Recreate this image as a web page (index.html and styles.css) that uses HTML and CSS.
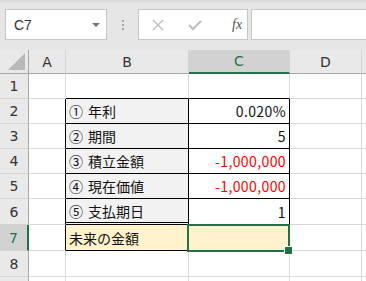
FILE: index.html
```html
<!DOCTYPE html>
<html lang="ja">
  <head>
    <meta charset="UTF-8" />
    <title>Excel</title>
    <link rel="stylesheet" href="styles.css">
  </head>
  <body>
    <div class="toolbar">
      <div class="namebox">
        <span>C7</span>
        <span class="arrow"></span>
      </div>
      <div class="grip"><i></i><i></i><i></i></div>
      <div class="fbuttons">
        <svg width="12" height="12" viewBox="0 0 12 12"><path d="M1 1 L11 11 M11 1 L1 11" stroke="#bdbdbd" stroke-width="1.4" fill="none"/></svg>
        <svg width="14" height="12" viewBox="0 0 14 12"><path d="M1 6 L5 10 L13 2" stroke="#bdbdbd" stroke-width="2" fill="none"/></svg>
        <span class="fx">fx</span>
      </div>
      <div class="finput"></div>
    </div>

    <div class="sheet">
      <div class="corner"><svg width="28" height="23" viewBox="0 0 28 23"><path d="M8 20 L25 20 L25 3 Z" fill="#b8b8b8"/></svg></div>
      <div class="colhead">A</div>
      <div class="colhead">B</div>
      <div class="colhead sel">C</div>
      <div class="colhead">D</div>
      <div class="colhead last"></div>

      <div class="rowhead">1</div>
      <div class="cell"></div>
      <div class="cell btop"></div>
      <div class="cell btop"></div>
      <div class="cell"></div>
      <div class="cell"></div>

      <div class="rowhead">2</div>
      <div class="cell bleft"></div>
      <div class="cell box label"><span class="no">①</span>年利</div>
      <div class="cell box num">0.020%</div>
      <div class="cell"></div>
      <div class="cell"></div>

      <div class="rowhead">3</div>
      <div class="cell bleft"></div>
      <div class="cell box label"><span class="no">②</span>期間</div>
      <div class="cell box num">5</div>
      <div class="cell"></div>
      <div class="cell"></div>

      <div class="rowhead">4</div>
      <div class="cell bleft"></div>
      <div class="cell box label"><span class="no">③</span>積立金額</div>
      <div class="cell box num red">-1,000,000</div>
      <div class="cell"></div>
      <div class="cell"></div>

      <div class="rowhead">5</div>
      <div class="cell bleft"></div>
      <div class="cell box label"><span class="no">④</span>現在価値</div>
      <div class="cell box num red">-1,000,000</div>
      <div class="cell"></div>
      <div class="cell"></div>

      <div class="rowhead">6</div>
      <div class="cell bleft"></div>
      <div class="cell box label dbl"><span class="no">⑤</span>支払期日</div>
      <div class="cell box num">1</div>
      <div class="cell"></div>
      <div class="cell"></div>

      <div class="rowhead sel">7</div>
      <div class="cell bleft"></div>
      <div class="cell box label yellow">未来の金額</div>
      <div class="cell box yellow active"></div>
      <div class="cell"></div>
      <div class="cell"></div>

      <div class="rowhead">8</div>
      <div class="cell"></div>
      <div class="cell"></div>
      <div class="cell"></div>
      <div class="cell"></div>
      <div class="cell"></div>

      <div class="rowhead"></div>
      <div class="cell"></div>
      <div class="cell"></div>
      <div class="cell"></div>
      <div class="cell"></div>
      <div class="cell"></div>
    </div>
  </body>
</html>
```

FILE: styles.css
```css
* {
  box-sizing: border-box;
}

body {
  margin: 0;
  overflow: hidden;
  font-family: "Noto Sans CJK JP", "Noto Sans", sans-serif;
  background: #fff;
}

.toolbar {
  height: 50px;
  background: #e6e6e6;
  border-top: 2px solid #dcdcdc;
  display: flex;
  align-items: flex-start;
  padding-top: 7px;
  padding-left: 5px;
}

.namebox {
  width: 102px;
  height: 31px;
  background: #fff;
  border: 1px solid #c6c6c6;
  display: flex;
  align-items: center;
  justify-content: space-between;
  padding: 0 6px 0 8px;
  font-family: "Liberation Sans", sans-serif;
  font-size: 14px;
  color: #333;
}

.arrow {
  width: 0;
  height: 0;
  border-left: 4px solid transparent;
  border-right: 4px solid transparent;
  border-top: 4px solid #777;
}

.grip {
  width: 31px;
  height: 31px;
  display: flex;
  flex-direction: column;
  align-items: center;
  justify-content: center;
  gap: 2px;
}

.grip i {
  width: 2px;
  height: 2px;
  background: #a6a6a6;
}

.fbuttons {
  width: 110px;
  height: 31px;
  background: #fff;
  border: 1px solid #c6c6c6;
  display: flex;
  align-items: center;
  padding-left: 13px;
  gap: 24px;
}

.fx {
  font-family: "Liberation Serif", serif;
  font-style: italic;
  font-size: 14px;
  color: #555;
  margin-left: 6px;
}

.finput {
  flex: 1;
  height: 31px;
  margin-left: 3px;
  background: #fff;
  border: 1px solid #c6c6c6;
  border-right: none;
}

.sheet {
  display: grid;
  grid-template-columns: 29px 37px 123px 101px 72px 1fr;
  grid-template-rows: 24px repeat(5, 25px) repeat(4, 26px);
}

.corner,
.colhead,
.rowhead {
  background: #e9e9e9;
  color: #333;
  font-family: "DejaVu Sans", sans-serif;
  font-size: 14px;
  display: flex;
  align-items: center;
  justify-content: center;
  border-right: 1px solid #d4d4d4;
  border-bottom: 1px solid #d4d4d4;
}

.corner,
.colhead {
  border-bottom-color: #a8a8a8;
}

.corner,
.rowhead {
  border-right-color: #a8a8a8;
}

.colhead.sel {
  background: #d2d2d2;
  color: #217346;
  border-bottom: 2px solid #217346;
}

.rowhead.sel {
  background: #d2d2d2;
  color: #217346;
  border-right: 2px solid #217346;
}

.cell {
  border-right: 1px solid #d9d9d9;
  border-bottom: 1px solid #d9d9d9;
  font-size: 14px;
  color: #111;
  display: flex;
  align-items: center;
  padding: 0 3px;
  white-space: nowrap;
}

.btop {
  border-bottom-color: #000;
}

.bleft {
  border-right-color: #000;
}

.box {
  border-right-color: #000;
  border-bottom-color: #000;
}

.label {
  background: #f2f2f2;
}

.no {
  margin-right: 5px;
}

.dbl {
  border-bottom: 3px double #000;
}

.num {
  justify-content: flex-end;
  letter-spacing: 0.4px;
}

.red {
  color: #ff0000;
}

.yellow {
  background: #fff2cc;
}

.active {
  position: relative;
}

.active::after {
  content: "";
  position: absolute;
  top: -1px;
  left: -2px;
  right: -1px;
  bottom: -2px;
  border: 2px solid #217346;
}

.active::before {
  content: "";
  position: absolute;
  right: -4px;
  bottom: -5px;
  width: 7px;
  height: 7px;
  background: #217346;
  border: 1px solid #fff;
  z-index: 1;
}
```
